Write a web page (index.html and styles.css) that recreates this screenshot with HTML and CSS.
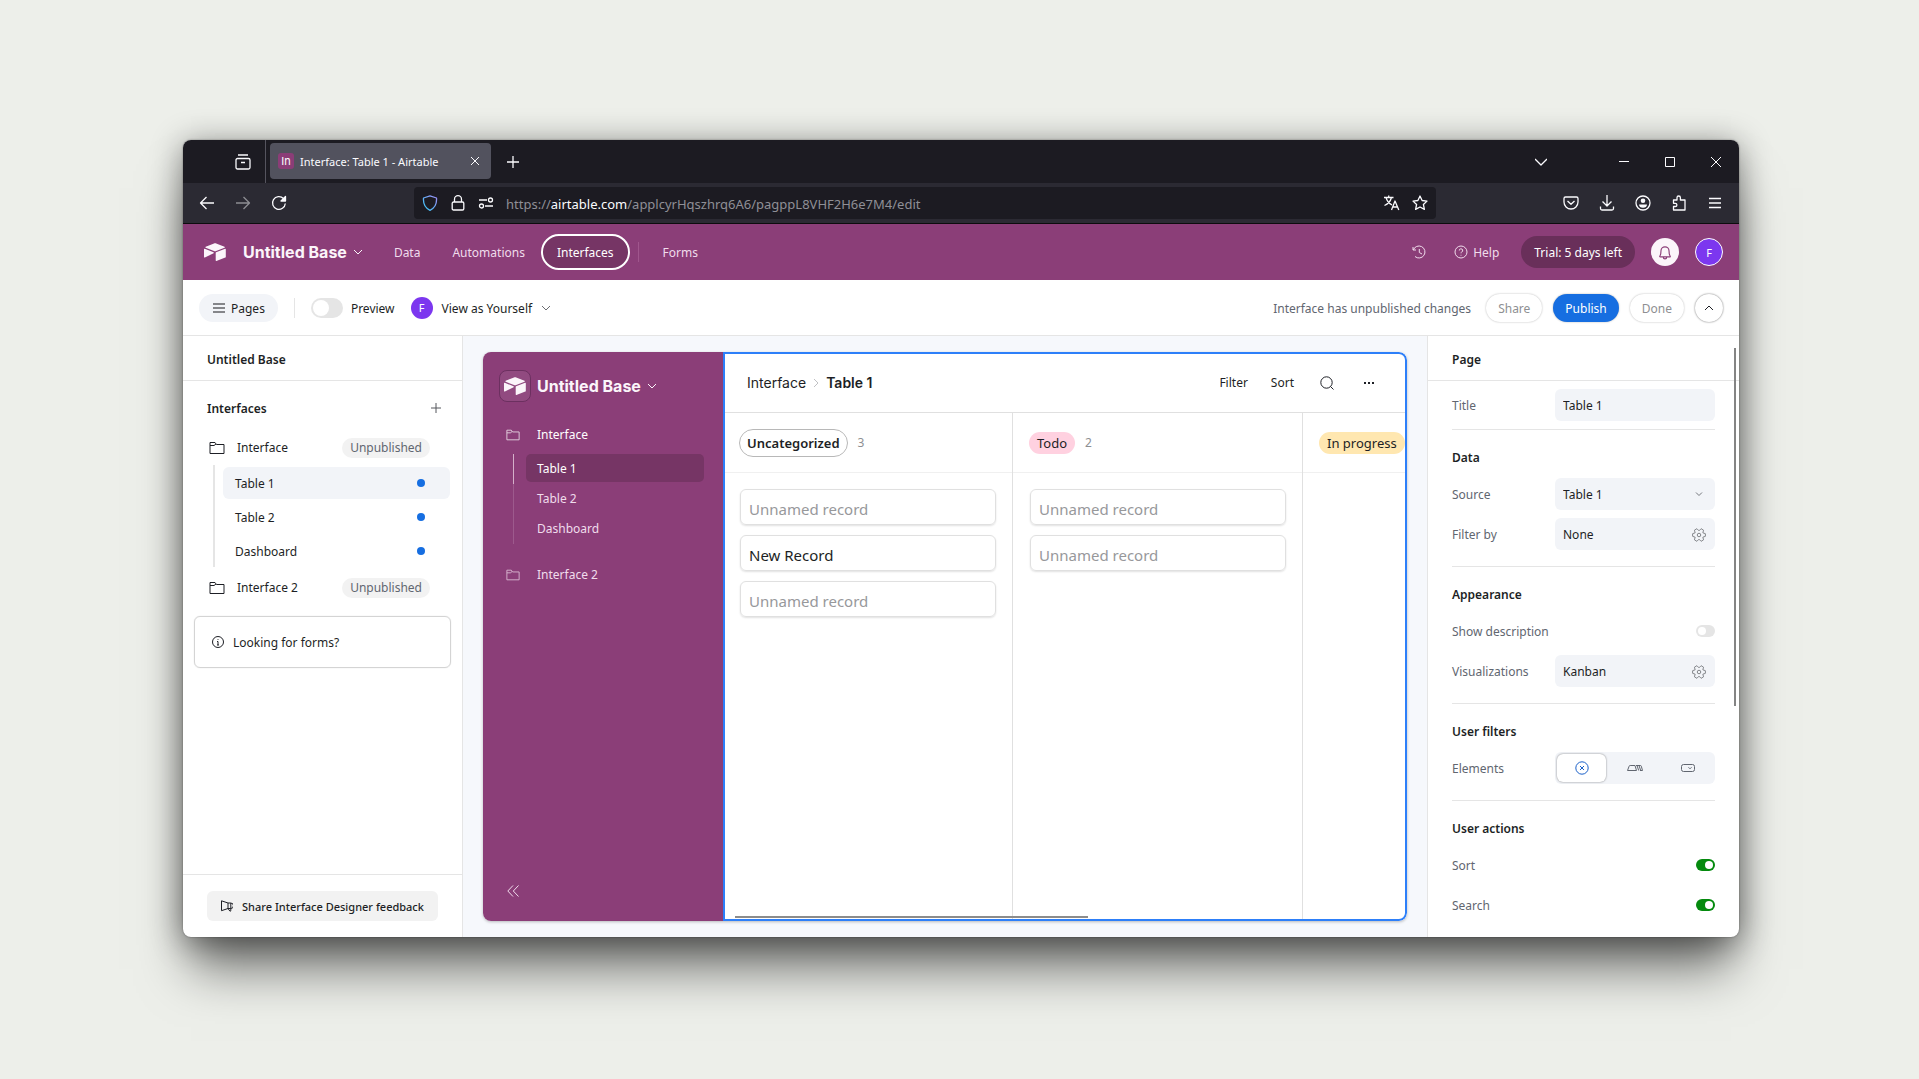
FILE: index.html
```html
<!DOCTYPE html>
<html lang="en">
<head>
    <meta charset="UTF-8">
    <meta name="viewport" content="width=device-width, initial-scale=1.0">
    <title>Interface: Table 1 - Airtable</title>
    <link rel="stylesheet" href="styles.css">
</head>
<body>
    <svg class="sprite" aria-hidden="true">
        <symbol id="logo" viewBox="0 0 22 18">
            <path d="M10 .4 1.700 3.800c-.5.2-.5.8 0 1l8.300 3.300c.7.3 1.500.3 2.200 0l8.300-3.300c.5-.2.5-.8 0-1L12.200.4c-.7-.3-1.500-.3-2.200 0z"/>
            <path d="M11.700 9.900v7.600c0 .4.4.6.7.5l8.900-3.500c.3-.1.5-.3.5-.6V6.300c0-.4-.4-.6-.7-.5l-9 3.500c-.3.1-.4.3-.4.6z"/>
            <path d="M9.600 10.300.9 14.400c-.4.2-.9-.1-.9-.5V6.300c0-.4.4-.7.8-.5l8.700 3.500c.4.2.5.8.1 1z"/>
        </symbol>
        <symbol id="chevron" viewBox="0 0 10 10"><path d="m1 3 4 4 4-4"/></symbol>
        <symbol id="close" viewBox="0 0 12 12"><path d="m2 2 8 8m0-8-8 8"/></symbol>
        <symbol id="plus" viewBox="0 0 12 12"><path d="M6 0v12M0 6h12"/></symbol>
        <symbol id="folder" viewBox="0 0 16 14"><path d="M1 12.500v-11h5l1.500 2H15v9zM1 4.500h4l2-1.500"/></symbol>
        <symbol id="gear" viewBox="0 0 16 16">
            <circle cx="8" cy="8" r="2"/>
            <path d="M15.300 6.500v3l-2.900 1 .8 3-2.800 1.700L8 12.800l-2.400 2.400-2.800-1.700.8-3-2.900-1v-3l2.900-1-.8-3L5.600.8 8 3.200 10.400.8l2.800 1.700-.8 3z"/>
        </symbol>
    </svg>

    <div class="window">
        <!-- Browser tabs -->
        <div class="tabbar">
            <button class="chrome-btn view-btn" aria-label="View tabs">
                <svg class="icon s16" viewBox="0 0 16 16"><path d="M3 1h10M2.500 4.500h11A1.500 1.500 0 0 1 15 6v7.500a1.500 1.500 0 0 1-1.500 1.500h-11A1.500 1.500 0 0 1 1 13.500V6a1.500 1.500 0 0 1 1.500-1.500zM6 8.500h4"/></svg>
            </button>
            <div class="tab">
                <span class="favicon">In</span>
                <span class="tab-title">Interface: Table 1 - Airtable</span>
                <button class="chrome-btn" aria-label="Close tab"><svg class="icon s12 thin"><use href="#close"/></svg></button>
            </div>
            <button class="chrome-btn new-tab" aria-label="New tab"><svg class="icon s12"><use href="#plus"/></svg></button>
            <div class="window-controls">
                <button class="chrome-btn tabs-list" aria-label="List all tabs"><svg class="icon s12" viewBox="0 0 12 12"><path d="m0 3 6 6 6-6"/></svg></button>
                <button class="chrome-btn" aria-label="Minimize"><svg class="icon s12 thin" viewBox="0 0 12 12"><path d="M1 5.500h10"/></svg></button>
                <button class="chrome-btn" aria-label="Maximize"><svg class="icon s12 thin" viewBox="0 0 12 12"><path d="M1.500 1.500h9v9h-9z"/></svg></button>
                <button class="chrome-btn" aria-label="Close"><svg class="icon s12 thin" viewBox="0 0 12 12"><path d="m1 1 10 10m0-10L1 11"/></svg></button>
            </div>
        </div>

        <!-- Browser toolbar -->
        <div class="toolbar">
            <div class="toolbar-nav">
                <button class="chrome-btn" aria-label="Back"><svg class="icon s16" viewBox="0 0 16 16"><path d="M15 8H1.500m6-6-6 6 6 6"/></svg></button>
                <button class="chrome-btn dim" aria-label="Forward"><svg class="icon s16" viewBox="0 0 16 16"><path d="M1 8h13.500m-6-6 6 6-6 6"/></svg></button>
                <button class="chrome-btn" aria-label="Reload"><svg class="icon s16" viewBox="0 0 16 16"><path d="M14.300 8.500A6.400 6.400 0 1 1 12.500 3.500"/><path d="M14.500 1.500v4.500H10z" fill="currentColor"/></svg></button>
            </div>
            <div class="urlbar">
                <svg class="icon s16 shield" viewBox="0 0 16 16">
                    <defs><linearGradient id="shieldFill" x1="0" y1="1" x2="1" y2="0"><stop offset="0" stop-color="#35c9f5"/><stop offset="1" stop-color="#9d8cf5"/></linearGradient></defs>
                    <path stroke="url(#shieldFill)" d="M8 .8 14.500 3c.4 5-1.500 10-6.500 12.300C3 13 1.100 8 1.500 3z"/>
                </svg>
                <svg class="icon s16" viewBox="0 0 16 16"><path d="M4.500 7V4.200a3.500 3.500 0 0 1 7 0V7M3.500 7h9a1.300 1.300 0 0 1 1.300 1.300v5.400a1.300 1.300 0 0 1-1.300 1.300h-9a1.300 1.300 0 0 1-1.300-1.300V8.300A1.300 1.300 0 0 1 3.500 7z"/></svg>
                <svg class="icon s16" viewBox="0 0 16 16"><path d="M1 5h8M7 11h8"/><circle cx="12.500" cy="5" r="2"/><circle cx="3.500" cy="11" r="2"/></svg>
                <span class="url">https://<b>airtable.com</b>/applcyrHqszhrq6A6/pagppL8VHF2H6e7M4/edit</span>
                <svg class="icon s16" viewBox="0 0 16 16"><path d="M0 2.500h9.500M4.700.5v2M2 2.500c1 3.500 3 6 6 7.500M7.500 2.500C6.500 6 4 9 .5 10.500M7.500 15l3.500-9 3.800 9M9 12h4.800"/></svg>
                <svg class="icon s16" viewBox="0 0 16 16"><path d="m8 1 2.100 4.500 4.900.6-3.600 3.400 1 4.900L8 12l-4.400 2.400 1-4.900L1 6.100l4.900-.6z"/></svg>
            </div>
            <div class="toolbar-actions">
                <button class="chrome-btn" aria-label="Save to Pocket"><svg class="icon s16" viewBox="0 0 16 16"><path d="M2.500 2h11A1.500 1.500 0 0 1 15 3.500V7A7 7 0 0 1 1 7V3.500A1.500 1.500 0 0 1 2.500 2zM4.500 6 8 9.200 11.500 6"/></svg></button>
                <button class="chrome-btn" aria-label="Downloads"><svg class="icon s16" viewBox="0 0 16 16"><path d="M8 0v10.500M3.500 6.500 8 11l4.500-4.500M1.500 11.500v2A1.500 1.500 0 0 0 3 15h10a1.500 1.500 0 0 0 1.500-1.500v-2"/></svg></button>
                <button class="chrome-btn" aria-label="Account"><svg class="icon s16" viewBox="0 0 16 16"><circle cx="8" cy="8" r="7"/><circle cx="8" cy="5.800" r="2.300" fill="currentColor" stroke="none"/><path d="M4 9.500h8c0 2-1.500 3.300-4 3.300s-4-1.300-4-3.300z" fill="currentColor" stroke="none"/></svg></button>
                <button class="chrome-btn" aria-label="Extensions"><svg class="icon s16" viewBox="0 0 16 16"><path d="M2.500 5H6V2.700a1.700 1.700 0 0 1 3.400 0V5H14v10H2.500v-3.500h1.800a1.500 1.500 0 0 0 0-3.200H2.500z"/></svg></button>
                <button class="chrome-btn" aria-label="Menu"><svg class="icon s16" viewBox="0 0 16 16"><path d="M2 3.500h12M2 8h12M2 12.500h12"/></svg></button>
            </div>
        </div>

        <!-- Base header -->
        <header class="base-header">
            <svg class="logo"><use href="#logo"/></svg>
            <button class="base-name">Untitled Base <svg class="icon s10"><use href="#chevron"/></svg></button>
            <nav class="base-nav">
                <a href="#">Data</a>
                <a href="#">Automations</a>
                <a href="#" class="active">Interfaces</a>
                <a href="#" class="forms">Forms</a>
            </nav>
            <div class="base-tools">
                <button class="header-btn" aria-label="History"><svg class="icon s14" viewBox="0 0 14 14"><path d="M1 2v3h3M1.300 5A6 6 0 1 1 3 11.500M7.300 4v3.500L10 9"/></svg></button>
                <button class="header-btn"><svg class="icon s14" viewBox="0 0 14 14"><circle cx="7" cy="7" r="6"/><path d="M5.300 5.500a1.700 1.700 0 1 1 2.500 1.500C7 7.400 7 7.700 7 8.300M7 9.800v.8"/></svg><span>Help</span></button>
                <button class="trial">Trial: 5 days left</button>
                <button class="bell" aria-label="Notifications"><svg class="icon s16" viewBox="0 0 14 14"><path d="M2.500 10.500c.8-1 1-2.500 1-4.500a3.500 3.500 0 0 1 7 0c0 2 .2 3.500 1 4.500.3.4 0 .8-.3.8H2.800c-.4 0-.6-.4-.3-.8zM5.500 11.500c0 2 3 2 3 0"/></svg></button>
                <span class="avatar ringed">F</span>
            </div>
        </header>

        <!-- Page bar -->
        <div class="page-bar">
            <button class="pages-btn"><svg class="icon s14" viewBox="0 0 14 14"><path d="M1 3h12M1 7h12M1 11h12"/></svg><span>Pages</span></button>
            <span class="divider"></span>
            <label class="preview"><input type="checkbox" class="switch large"><span>Preview</span></label>
            <button class="view-as"><span class="avatar">F</span><span>View as Yourself</span><svg class="icon s10"><use href="#chevron"/></svg></button>
            <div class="page-actions">
                <span class="status">Interface has unpublished changes</span>
                <button class="pill">Share</button>
                <button class="pill primary">Publish</button>
                <button class="pill">Done</button>
                <button class="pill round" aria-label="Collapse header"><svg class="icon s10" viewBox="0 0 10 10"><path d="m1 7 4-4 4 4"/></svg></button>
            </div>
        </div>

        <div class="workspace">
            <!-- Left panel -->
            <aside class="left-panel">
                <h2 class="panel-title">Untitled Base</h2>
                <div class="list-head">
                    <h3>Interfaces</h3>
                    <button class="add-btn" aria-label="Add interface"><svg class="icon s10" viewBox="0 0 10 10"><path d="M5 0v10M0 5h10"/></svg></button>
                </div>
                <div class="folder"><svg class="icon s16"><use href="#folder"/></svg><span>Interface</span><span class="badge">Unpublished</span></div>
                <ul class="page-list">
                    <li><a href="#" class="selected"><span>Table 1</span><i class="dot"></i></a></li>
                    <li><a href="#"><span>Table 2</span><i class="dot"></i></a></li>
                    <li><a href="#"><span>Dashboard</span><i class="dot"></i></a></li>
                </ul>
                <div class="folder"><svg class="icon s16"><use href="#folder"/></svg><span>Interface 2</span><span class="badge">Unpublished</span></div>
                <button class="forms-card"><svg class="icon s12" viewBox="0 0 12 12"><circle cx="6" cy="6" r="5.500"/><path d="M5 5.500h1V9M5 9h2M6 3v.8"/></svg><span>Looking for forms?</span></button>
                <div class="panel-foot">
                    <button class="feedback"><svg class="icon s12" viewBox="0 0 12 12"><path d="M.5.8v9.900L7 8.500h2.700a2.200 2.200 0 0 0 0-5.500H7zM7 3v5.500l2 2.800.8-.5V3"/></svg><span>Share Interface Designer feedback</span></button>
                </div>
            </aside>

            <!-- Interface preview -->
            <main class="canvas">
                <div class="app">
                    <nav class="app-nav">
                        <button class="app-name"><span class="logo-box"><svg class="logo"><use href="#logo"/></svg></span>Untitled Base<svg class="icon s10"><use href="#chevron"/></svg></button>
                        <a href="#" class="app-folder current"><svg class="icon s14"><use href="#folder"/></svg>Interface</a>
                        <ul class="app-pages">
                            <li class="current"><a href="#">Table 1</a></li>
                            <li><a href="#">Table 2</a></li>
                            <li><a href="#">Dashboard</a></li>
                        </ul>
                        <a href="#" class="app-folder"><svg class="icon s14"><use href="#folder"/></svg>Interface 2</a>
                        <button class="collapse" aria-label="Collapse sidebar"><svg class="icon s12" viewBox="0 0 12 12"><path d="M6 .5.800 6 6 11.500M11.500.5 6.300 6l5.200 5.500"/></svg></button>
                    </nav>
                    <section class="board-page">
                        <div class="board-head">
                            <div class="crumbs"><span>Interface</span><svg class="icon s10 crumb-arrow" viewBox="0 0 10 10"><path d="m3 1 4 4-4 4"/></svg><strong>Table 1</strong></div>
                            <div class="board-tools">
                                <button>Filter</button>
                                <button>Sort</button>
                                <button class="icon-btn" aria-label="Search"><svg class="icon s14" viewBox="0 0 14 14"><circle cx="6.500" cy="6.500" r="5.700"/><path d="m10.500 10.500 3 3"/></svg></button>
                                <button class="icon-btn" aria-label="More"><svg class="s12" viewBox="0 0 12 12" fill="currentColor"><path d="M1 5h2v2H1zM5 5h2v2H5zM9 5h2v2H9z"/></svg></button>
                            </div>
                        </div>
                        <div class="board">
                            <div class="column">
                                <div class="column-head"><span class="chip outlined">Uncategorized</span><span class="count">3</span></div>
                                <div class="cards">
                                    <div class="card unnamed">Unnamed record</div>
                                    <div class="card">New Record</div>
                                    <div class="card unnamed">Unnamed record</div>
                                </div>
                            </div>
                            <div class="column">
                                <div class="column-head"><span class="chip pink">Todo</span><span class="count">2</span></div>
                                <div class="cards">
                                    <div class="card unnamed">Unnamed record</div>
                                    <div class="card unnamed">Unnamed record</div>
                                </div>
                            </div>
                            <div class="column">
                                <div class="column-head"><span class="chip yellow">In progress</span></div>
                            </div>
                        </div>
                        <div class="h-scroll"></div>
                    </section>
                </div>
            </main>

            <!-- Page settings -->
            <aside class="right-panel">
                <h2 class="panel-title">Page</h2>
                <form class="settings">
                    <section class="tight">
                        <div class="row"><label for="pageTitle">Title</label><input type="text" class="field" id="pageTitle" value="Table 1"></div>
                    </section>
                    <section>
                        <h3>Data</h3>
                        <div class="row">
                            <label for="source">Source</label>
                            <span class="select-wrap"><select class="field" id="source"><option>Table 1</option></select><svg class="icon s10" viewBox="0 0 10 10"><path d="m2 3.500 3 3 3-3"/></svg></span>
                        </div>
                        <div class="row"><label for="filterBy">Filter by</label><button type="button" class="field" id="filterBy">None<svg class="icon s14"><use href="#gear"/></svg></button></div>
                    </section>
                    <section>
                        <h3>Appearance</h3>
                        <div class="row"><label for="showDesc">Show description</label><input type="checkbox" class="switch" id="showDesc"></div>
                        <div class="row"><label for="visual">Visualizations</label><button type="button" class="field" id="visual">Kanban<svg class="icon s14"><use href="#gear"/></svg></button></div>
                    </section>
                    <section>
                        <h3>User filters</h3>
                        <div class="row">
                            <span>Elements</span>
                            <div class="segments">
                                <button type="button" class="on" aria-label="None"><svg class="icon s14" viewBox="0 0 14 14"><circle cx="7" cy="7" r="6.200"/><path d="m5 5 4 4m0-4L5 9"/></svg></button>
                                <button type="button" aria-label="Tabs"><svg class="icon s16" viewBox="0 0 16 16"><path d="M.5 10.500h9L8 5.500H3.200c-.7 0-1 .3-1.200 1zM10 5.500l1.700 5M12 5.500l1.700 5M9 5.500h4.500c.5 0 .7.3.8.7l1.200 4.300H13"/></svg></button>
                                <button type="button" aria-label="Dropdown"><svg class="icon s14" viewBox="0 0 14 14"><rect x=".5" y="3.500" width="13" height="7" rx="2"/><path d="m7.500 6.300 1.500 1.500 1.500-1.500"/></svg></button>
                            </div>
                        </div>
                    </section>
                    <section>
                        <h3>User actions</h3>
                        <div class="row"><label for="sortOn">Sort</label><input type="checkbox" class="switch" id="sortOn" checked></div>
                        <div class="row"><label for="searchOn">Search</label><input type="checkbox" class="switch" id="searchOn" checked></div>
                    </section>
                </form>
                <div class="v-scroll"></div>
            </aside>
        </div>
    </div>
</body>
</html>
```
FILE: styles.css
```css
* {
    box-sizing: border-box;
}

body {
    margin: 0;
    height: 100vh;
    padding: 140px 180px 142px 183px;
    background-color: #edefea;
    color: #1d1f25;
    font-family: "Noto Sans", "Open Sans", sans-serif;
    font-size: 12px;
    line-height: 20px;
}

button,
input,
select {
    margin: 0;
    padding: 0;
    border: none;
    background: none;
    color: inherit;
    font: inherit;
    cursor: pointer;
}

button {
    display: flex;
    align-items: center;
    justify-content: center;
}

a {
    color: inherit;
    text-decoration: none;
}

ul {
    margin: 0;
    padding: 0;
    list-style: none;
}

h2,
h3 {
    margin: 0;
    font-size: 12px;
    font-weight: 600;
}

.sprite {
    display: none;
}

.icon {
    flex: none;
    fill: none;
    stroke: currentColor;
    stroke-width: 1;
    stroke-linejoin: round;
}

.s10 { width: 10px; height: 10px; }
.s12 { width: 12px; height: 12px; }
.s14 { width: 14px; height: 14px; }
.s16 { width: 16px; height: 16px; }

.logo {
    flex: none;
    width: 22px;
    height: 18px;
    fill: #fbf5fa;
}

.window {
    display: flex;
    flex-direction: column;
    height: 100%;
    border-radius: 8px;
    overflow: hidden;
    background-color: #fff;
    box-shadow: 0 0 2px rgba(0, 0, 0, 0.4), 0 40px 48px -8px rgba(0, 0, 0, 0.5), 0 4px 32px rgba(0, 0, 0, 0.45);
}

/* Browser chrome */
.tabbar {
    display: flex;
    flex: none;
    height: 43px;
    background-color: #1c1b22;
    color: #fbfbfe;
}

.chrome-btn .icon {
    stroke-width: 1.3;
}

.chrome-btn .thin {
    stroke-width: 1;
}

.view-btn {
    width: 83px;
    padding-left: 37px;
    border-right: 1px solid #55545e;
}

.tab {
    display: flex;
    align-items: center;
    gap: 6px;
    width: 221px;
    height: 36px;
    margin: 3px 4px;
    padding: 0 10px 0 8px;
    border-radius: 4px;
    background-color: #52525e;
}

.favicon {
    width: 16px;
    height: 16px;
    border-radius: 3px;
    background-color: #8b3d77;
    font-family: Inter, sans-serif;
    font-size: 11px;
    line-height: 17px;
    text-align: center;
}

.tab-title {
    flex: 1;
    padding-top: 1px;
    font-size: 11px;
    white-space: nowrap;
}

.new-tab {
    width: 36px;
}

.window-controls {
    display: flex;
    gap: 34px;
    margin-left: auto;
    padding-right: 17px;
}

.tabs-list {
    margin-right: 37px;
}

.toolbar {
    display: flex;
    flex: none;
    align-items: center;
    justify-content: space-between;
    height: 41px;
    padding: 0 16px;
    border-bottom: 1px solid #0c0c0d;
    background-color: #2b2a33;
    color: #fbfbfe;
}

.toolbar-nav,
.toolbar-actions {
    display: flex;
    gap: 20px;
}

.toolbar-nav {
    width: 215px;
}

.dim {
    color: #8d8d93;
}

.urlbar {
    display: flex;
    flex: 1;
    align-items: center;
    gap: 12px;
    height: 32px;
    margin-right: 127px;
    padding: 0 8px;
    border-radius: 4px;
    background-color: #1c1b22;
}

.urlbar .icon {
    stroke-width: 1.3;
}

.url {
    flex: 1;
    padding-top: 2px;
    color: #8f8f96;
    font-size: 13px;
}

.url b {
    color: #fbfbfe;
    font-weight: 400;
}

/* Base header */
.base-header {
    display: flex;
    flex: none;
    align-items: center;
    height: 56px;
    padding: 0 16px 0 21px;
    background-color: #8b3e78;
    color: #f0dcec;
}

.base-name,
.app-name {
    gap: 6px;
    color: #fbf5fa;
    font-family: Inter, sans-serif;
    font-size: 16px;
    font-weight: 700;
}

.base-name {
    margin-left: 17px;
}

.base-nav {
    display: flex;
    align-items: center;
    margin-left: 15px;
}

.base-nav a {
    padding: 2px 16px 0;
    line-height: 30px;
}

.base-nav .active {
    border: 2px solid #fff;
    border-radius: 18px;
    padding: 2px 14px 0;
    background-color: #763565;
    color: #fff;
}

.base-nav .forms {
    margin-left: 8px;
    padding-left: 24px;
    border-left: 1px solid #a0568d;
    line-height: 18px;
}

.base-tools {
    display: flex;
    align-items: center;
    gap: 16px;
    margin-left: auto;
}

.header-btn {
    gap: 5px;
    padding: 0 6px;
}

/* labels sit a touch lower than the icon beside them */
.header-btn span,
.pages-btn span,
.preview span,
.view-as span + span,
.page-list span,
.forms-card span,
.feedback span,
.row label,
.row > span:first-child,
.list-head h3 {
    padding-top: 2px;
}

.trial {
    height: 32px;
    padding: 2px 13px 0;
    border-radius: 16px;
    background-color: #692f5a;
    color: #fff;
}

.bell {
    width: 28px;
    height: 28px;
    border-radius: 50%;
    background-color: #fbf5fa;
    color: #8b3e78;
}

.avatar {
    width: 22px;
    height: 22px;
    border-radius: 50%;
    background-color: #7c37ef;
    color: #fff;
    font-size: 11px;
    line-height: 22px;
    text-align: center;
}

.ringed {
    width: 28px;
    height: 28px;
    border: 1px solid #fff;
    line-height: 27px;
}

/* Page bar */
.page-bar {
    display: flex;
    flex: none;
    align-items: center;
    height: 56px;
    padding: 0 16px;
    border-bottom: 1px solid #e5e5e5;
}

.pages-btn {
    gap: 5px;
    height: 28px;
    padding: 0 13px;
    border-radius: 14px;
    background-color: #f2f4f8;
}

.pages-btn .icon {
    stroke: #85868a;
    stroke-width: 2;
}

.divider {
    width: 1px;
    height: 20px;
    margin: 0 16px;
    background-color: #e5e5e5;
}

.preview {
    display: flex;
    align-items: center;
    gap: 8px;
}

.view-as {
    gap: 9px;
    margin-left: 16px;
}

.view-as > .icon {
    stroke: #6b6d72;
}

.page-actions {
    display: flex;
    align-items: center;
    gap: 11px;
    margin-left: auto;
}

.status {
    margin-right: 4px;
    padding-top: 2px;
    color: #616670;
}

.pill {
    height: 28px;
    padding: 2px 12px 0;
    border-radius: 14px;
    box-shadow: 0 0 2px rgba(0, 0, 0, 0.3);
    color: #8e8f92;
}

.pill.primary {
    background-color: #166ee1;
    color: #fff;
}

.pill.round {
    width: 28px;
    padding: 0;
    box-shadow: 0 0 2px rgba(0, 0, 0, 0.6);
    color: #1d1f25;
}

.switch {
    position: relative;
    flex: none;
    width: 19px;
    height: 12px;
    border-radius: 10px;
    background-color: #e5e5e5;
    appearance: none;
}

.switch::before {
    content: "";
    position: absolute;
    top: 2px;
    left: 2px;
    width: 8px;
    height: 8px;
    border-radius: 50%;
    background-color: #fff;
}

.switch:checked {
    background-color: #048a0e;
}

.switch:checked::before {
    left: 9px;
}

.switch.large {
    width: 32px;
    height: 20px;
}

.switch.large::before {
    width: 16px;
    height: 16px;
}

.workspace {
    display: flex;
    flex: 1;
    min-height: 0;
}

.panel-title {
    height: 45px;
    padding: 0 24px;
    border-bottom: 1px solid #e5e5e5;
    line-height: 48px;
}

/* Left panel */
.left-panel {
    display: flex;
    flex: none;
    flex-direction: column;
    width: 280px;
    border-right: 1px solid #e5e5e5;
}

.list-head {
    display: flex;
    align-items: center;
    justify-content: space-between;
    height: 51px;
    padding: 2px 21px 0 24px;
}

.add-btn {
    color: #55575c;
}

.folder {
    display: flex;
    align-items: center;
    gap: 12px;
    height: 32px;
    padding: 0 32px 0 26px;
}

.badge {
    margin-left: auto;
    padding: 0 8px;
    border-radius: 10px;
    background-color: #f2f2f2;
    color: #616670;
}

.page-list {
    display: flex;
    flex-direction: column;
    gap: 2px;
    margin: 1px 12px 5px 30px;
    padding: 2px 0 0 8px;
    border-left: 2px solid #e5e5e5;
}

.page-list a {
    display: flex;
    align-items: center;
    justify-content: space-between;
    height: 32px;
    padding: 0 25px 0 12px;
    border-radius: 6px;
}

.page-list .selected {
    background-color: #f2f4f8;
}

.dot {
    width: 8px;
    height: 8px;
    border-radius: 50%;
    background-color: #166ee1;
}

.forms-card {
    justify-content: flex-start;
    gap: 9px;
    height: 52px;
    margin: 12px 11px;
    padding: 0 17px;
    border: 1px solid #d4d4d4;
    border-radius: 6px;
    box-shadow: 0 0 1px rgba(0, 0, 0, 0.2);
}

.panel-foot {
    margin-top: auto;
    padding: 16px 24px;
    border-top: 1px solid #e5e5e5;
}

.feedback {
    gap: 9px;
    width: 100%;
    height: 30px;
    border-radius: 6px;
    background-color: #f2f2f2;
    font-size: 11px;
    font-weight: 500;
}

/* Interface preview */
.canvas {
    display: flex;
    flex: 1;
    min-width: 0;
    padding: 16px 20px;
    background-color: #f6f8fc;
}

.app {
    display: flex;
    flex: 1;
    min-width: 0;
    border-radius: 8px;
    background-color: #fff;
    box-shadow: 0 1px 3px rgba(0, 0, 0, 0.25);
}

.app-nav {
    display: flex;
    flex: none;
    flex-direction: column;
    width: 240px;
    padding: 18px 19px 18px 16px;
    border-radius: 8px 0 0 8px;
    background-color: #8b3e78;
    color: #f0dcec;
}

.app-name {
    align-self: flex-start;
}

.app-name .logo-box {
    display: flex;
    align-items: center;
    justify-content: center;
    width: 32px;
    height: 32px;
    border: 1px solid #6c3060;
    border-radius: 8px;
    background-color: #914a80;
}

.app-folder {
    display: flex;
    align-items: center;
    gap: 17px;
    height: 28px;
    padding: 2px 0 0 7px;
}

.app-folder .icon {
    opacity: 0.8;
}

.app-name + .app-folder {
    margin-top: 18px;
}

.app-folder.current,
.app-pages .current {
    color: #fff;
}

.app-pages {
    margin: 6px 0 16px 14px;
}

.app-pages li {
    padding: 0 0 2px 12px;
    border-left: 1px solid #9d5a8d;
}

.app-pages li.current {
    border-left-color: #d4b0ca;
}

.app-pages a {
    display: block;
    padding: 2px 0 0 11px;
    border-radius: 5px;
    line-height: 26px;
}

.app-pages .current a {
    background-color: #763565;
}

.collapse {
    align-self: flex-start;
    margin: auto 0 6px 8px;
}

.board-page {
    position: relative;
    display: flex;
    flex: 1;
    flex-direction: column;
    min-width: 0;
    border-radius: 0 8px 8px 0;
    overflow: hidden;
}

/* selection outline over the board */
.board-page::after {
    content: "";
    position: absolute;
    inset: 0;
    border: 2px solid #2d7ff9;
    border-radius: 0 8px 8px 0;
    pointer-events: none;
}

.board-head {
    display: flex;
    align-items: center;
    justify-content: space-between;
    height: 61px;
    padding: 2px 29px 0 24px;
    border-bottom: 1px solid #e0e0e0;
}

.crumbs {
    display: flex;
    align-items: center;
    gap: 5px;
    font-family: Inter, sans-serif;
    font-size: 14px;
}

.crumbs strong {
    font-weight: 600;
}

.crumb-arrow {
    stroke: #c0c1c4;
}

.board-tools {
    display: flex;
    gap: 23px;
}

.icon-btn {
    padding: 0 3px;
}

.board {
    display: flex;
    flex: 1;
    min-height: 0;
}

.column {
    flex: none;
    width: 290px;
    border-right: 1px solid #e0e0e0;
}

.column-head {
    display: flex;
    align-items: center;
    gap: 10px;
    height: 60px;
    padding-left: 16px;
    border-bottom: 1px solid #f0f0f0;
}

.chip {
    padding: 0 8px;
    border-radius: 14px;
    font-size: 13px;
    line-height: 22px;
}

.chip.outlined {
    padding: 0 7px;
    border: 1px solid #b8b8b8;
    font-weight: 600;
    line-height: 26px;
}

.chip.pink {
    background-color: #ffd1e0;
}

.chip.yellow {
    background-color: #ffe7b0;
}

.count {
    color: #8e8f92;
}

.cards {
    display: flex;
    flex-direction: column;
    gap: 10px;
    padding: 16px 16px 16px 17px;
}

.card {
    height: 36px;
    padding: 2px 8px 0;
    border: 1px solid #e0e0e0;
    border-radius: 6px;
    box-shadow: 0 1px 2px rgba(0, 0, 0, 0.12);
    font-size: 15px;
    line-height: 34px;
}

.card.unnamed {
    color: #97989b;
}

.h-scroll {
    position: absolute;
    bottom: 3px;
    left: 12px;
    width: 353px;
    height: 2px;
    background-color: #8c8c8c;
}

/* Page settings */
.right-panel {
    position: relative;
    flex: none;
    width: 312px;
    border-left: 1px solid #e5e5e5;
}

.settings {
    padding: 0 24px;
}

.settings section {
    display: flex;
    flex-direction: column;
    gap: 8px;
    padding: 16px 0;
    border-bottom: 1px solid #e5e5e5;
}

.settings section:last-child {
    border: none;
}

.settings .tight {
    padding: 8px 0;
}

.settings h3 {
    line-height: 24px;
}

.row {
    display: flex;
    align-items: center;
    justify-content: space-between;
    height: 32px;
    color: #616670;
}

.field {
    display: flex;
    align-items: center;
    justify-content: space-between;
    width: 160px;
    height: 32px;
    padding: 1px 9px 0 8px;
    border-radius: 6px;
    background-color: #f2f4f8;
    color: #1d1f25;
    appearance: none;
}

.field .icon,
.select-wrap .icon {
    stroke: #75777c;
}

.select-wrap {
    position: relative;
}

.select-wrap .icon {
    position: absolute;
    top: 11px;
    right: 11px;
    pointer-events: none;
}

.segments {
    display: flex;
    width: 160px;
    height: 32px;
    border-radius: 6px;
    background-color: #f2f4f8;
}

.segments button {
    flex: 1;
    margin: 2px;
    border-radius: 6px;
}

.segments .on {
    background-color: #fff;
    box-shadow: 0 0 2px rgba(0, 0, 0, 0.5);
    color: #1b61c9;
}

.v-scroll {
    position: absolute;
    top: 12px;
    right: 3px;
    width: 2px;
    height: 358px;
    background-color: #848484;
}
```
